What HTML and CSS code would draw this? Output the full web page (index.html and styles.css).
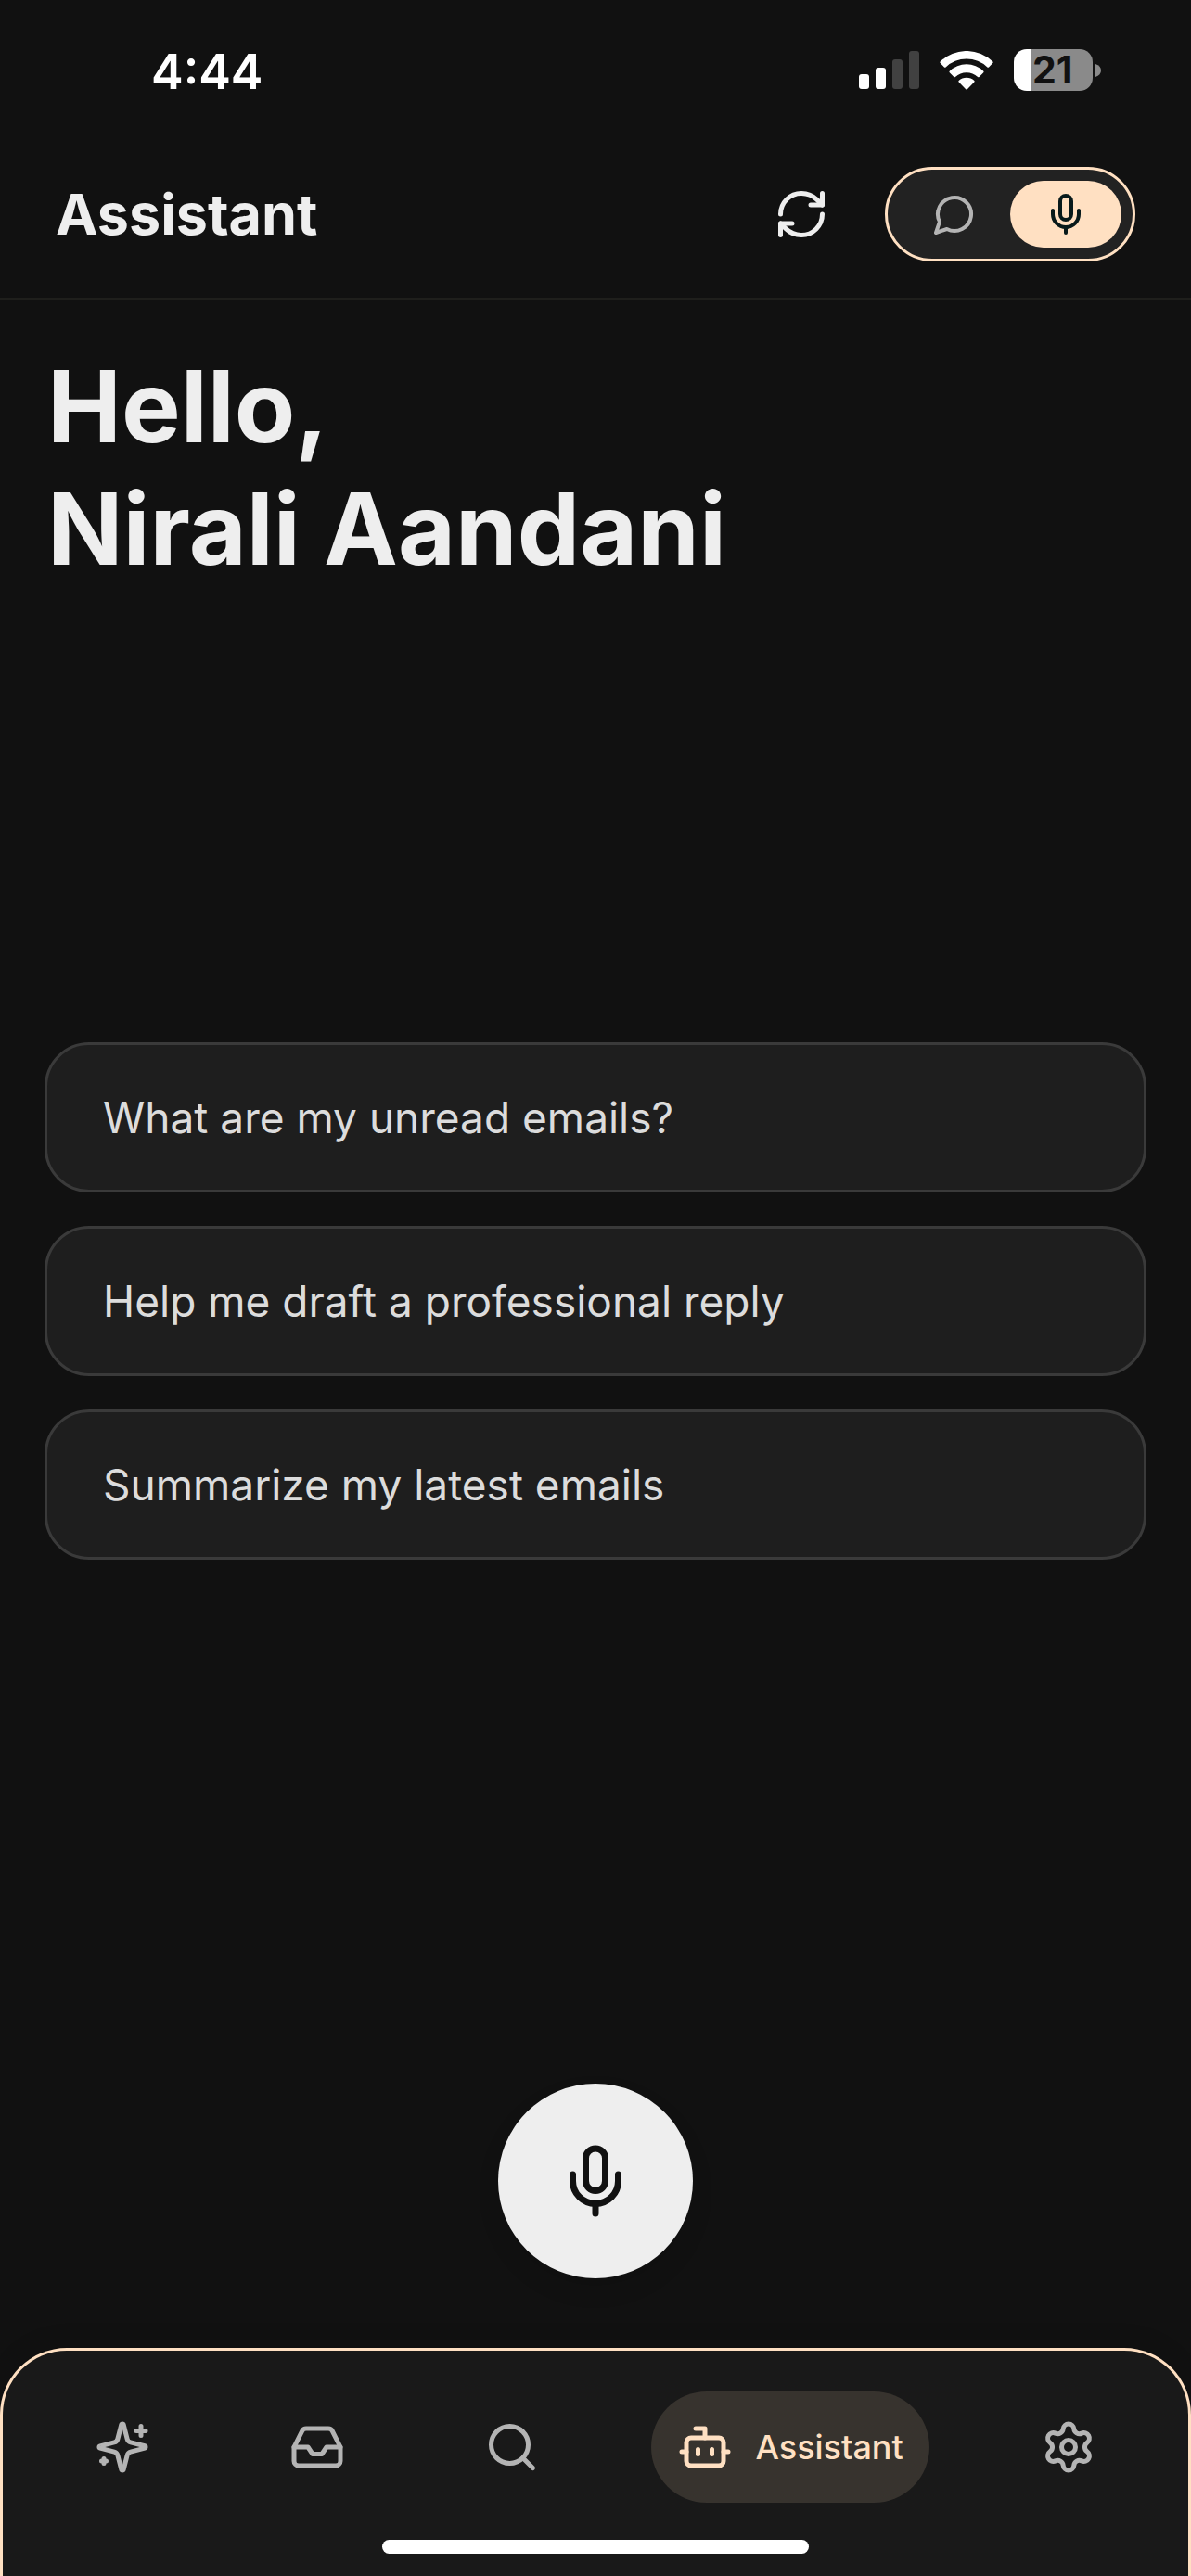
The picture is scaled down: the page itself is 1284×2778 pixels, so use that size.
FILE: index.html
```html
<!DOCTYPE html>
<html lang="en">
<head>
<meta charset="utf-8">
<meta name="viewport" content="width=device-width, initial-scale=1">
<title>Assistant</title>
<link rel="stylesheet" href="styles.css">
</head>
<body>
<div class="app">
  <div class="status-bar">
    <time class="clock">4:44</time>
    <div class="status-icons">
      <svg class="signal" viewBox="0 0 65 41" aria-hidden="true">
        <rect x="0" y="25" width="11" height="16" rx="3" fill="#fff"/>
        <rect x="18" y="18" width="11" height="23" rx="3" fill="#fff"/>
        <rect x="36" y="9" width="11" height="32" rx="3" fill="#414141"/>
        <rect x="54" y="0" width="11" height="41" rx="3" fill="#414141"/>
      </svg>
      <svg class="wifi" viewBox="0 0 58 42" fill="#fff" aria-hidden="true">
        <path d="M.6 11.6Q0 12.4.7 13.1L5 17.4Q5.8 18.2 6.6 17.4A32.5 32.5 0 0 1 51.4 17.4Q52.2 18.2 53 17.4L57.3 13.1Q58 12.4 57.4 11.6A40.5 40.5 0 0 0 .6 11.6Z"/>
        <path d="M10.7 21.7Q10 22.5 10.7 23.2L15.4 27.9Q16.1 28.6 16.9 27.9A18 18 0 0 1 41.1 27.9Q41.9 28.6 42.6 27.9L47.3 23.2Q48 22.5 47.3 21.7A26.5 26.5 0 0 0 10.7 21.7Z"/>
        <path d="M20.6 32Q19.9 32.8 20.7 33.6L28.2 41.2Q29 42 29.8 41.2L37.3 33.6Q38.1 32.8 37.4 32A12.5 12.5 0 0 0 20.6 32Z"/>
      </svg>
      <div class="battery">
        <span class="battery-body">21</span>
        <svg class="battery-cap" viewBox="0 0 6 14" aria-hidden="true"><path d="M0 0Q6 2 6 7T0 14Z" fill="#8a8a8a"/></svg>
      </div>
    </div>
  </div>

  <header class="header">
    <h1 class="title">Assistant</h1>
    <button class="refresh" type="button" aria-label="Refresh">
      <svg class="icon icon-lg" viewBox="0 0 24 24"><path d="M3 12a9 9 0 0 1 9-9 9.75 9.75 0 0 1 6.74 2.74L21 8"/><path d="M21 3v5h-5"/><path d="M21 12a9 9 0 0 1-9 9 9.75 9.75 0 0 1-6.74-2.74L3 16"/><path d="M8 16H3v5"/></svg>
    </button>
    <div class="mode-switch">
      <button class="mode" type="button" aria-label="Chat">
        <svg class="icon icon-md" viewBox="0 0 24 24"><path d="M7.9 20A9 9 0 1 0 4 16.1L2 22Z"/></svg>
      </button>
      <button class="mode mode-active" type="button" aria-label="Voice">
        <svg class="icon icon-md" viewBox="0 0 24 24"><rect x="9" y="2" width="6" height="13" rx="3"/><path d="M19 10v2a7 7 0 0 1-14 0v-2"/><path d="M12 19v3"/></svg>
      </button>
    </div>
  </header>

  <main class="content">
    <h2 class="greeting">Hello,<br>Nirali Aandani</h2>
    <div class="prompts">
      <button class="prompt" type="button">What are my unread emails?</button>
      <button class="prompt" type="button">Help me draft a professional reply</button>
      <button class="prompt" type="button">Summarize my latest emails</button>
    </div>
    <button class="talk" type="button" aria-label="Start talking">
      <svg class="icon icon-xl" viewBox="0 0 24 24"><rect x="9" y="2" width="6" height="13" rx="3"/><path d="M19 10v2a7 7 0 0 1-14 0v-2"/><path d="M12 19v3"/></svg>
    </button>
  </main>

  <footer class="tab-bar">
    <nav class="tabs">
      <a class="tab" href="#" aria-label="Highlights">
        <svg class="icon icon-lg" viewBox="0 0 24 24"><path d="M9.937 15.5A2 2 0 0 0 8.5 14.063l-6.135-1.582a.5.5 0 0 1 0-.962L8.5 9.936A2 2 0 0 0 9.937 8.5l1.582-6.135a.5.5 0 0 1 .963 0L14.063 8.5A2 2 0 0 0 15.5 9.937l6.135 1.581a.5.5 0 0 1 0 .964L15.5 14.063a2 2 0 0 0-1.437 1.437l-1.582 6.135a.5.5 0 0 1-.963 0z"/><path d="M20 3v4M22 5h-4M4 17v2M5 18H3"/></svg>
      </a>
      <a class="tab" href="#" aria-label="Inbox">
        <svg class="icon icon-lg" viewBox="0 0 24 24"><path d="M22 12h-6l-2 3h-4l-2-3H2"/><path d="M5.45 5.11 2 12v6a2 2 0 0 0 2 2h16a2 2 0 0 0 2-2v-6l-3.45-6.89A2 2 0 0 0 16.76 4H7.24a2 2 0 0 0-1.79 1.11z"/></svg>
      </a>
      <a class="tab" href="#" aria-label="Search">
        <svg class="icon icon-lg" viewBox="0 0 24 24"><circle cx="11" cy="11" r="8"/><path d="m21 21-4.3-4.3"/></svg>
      </a>
      <a class="tab tab-active" href="#" aria-current="page">
        <svg class="icon icon-lg" viewBox="0 0 24 24"><path d="M12 8V4H8"/><rect width="16" height="12" x="4" y="8" rx="2"/><path d="M2 14h2M20 14h2M15 13v2M9 13v2"/></svg>
        <span>Assistant</span>
      </a>
      <a class="tab" href="#" aria-label="Settings">
        <svg class="icon icon-lg" viewBox="0 0 24 24"><path d="M9.671 4.136a2.34 2.34 0 0 1 4.659 0 2.34 2.34 0 0 0 3.319 1.915 2.34 2.34 0 0 1 2.33 4.033 2.34 2.34 0 0 0 0 3.831 2.34 2.34 0 0 1-2.33 4.033 2.34 2.34 0 0 0-3.319 1.915 2.34 2.34 0 0 1-4.659 0 2.34 2.34 0 0 0-3.32-1.915 2.34 2.34 0 0 1-2.33-4.033 2.34 2.34 0 0 0 0-3.831A2.34 2.34 0 0 1 6.35 6.051a2.34 2.34 0 0 0 3.319-1.915"/><circle cx="12" cy="12" r="3"/></svg>
      </a>
    </nav>
    <div class="home-indicator"></div>
  </footer>
</div>
</body>
</html>
```
FILE: styles.css
```css
:root {
  --bg: #111111;
  --surface: #191919;
  --text: #eeeeee;
  --muted: #b4b4b4;
  --accent: #ffe0c2;
}

* {
  box-sizing: border-box;
}

body {
  margin: 0;
  background: var(--bg);
  color: var(--text);
  font-family: Inter, "Liberation Sans", sans-serif;
}

button {
  padding: 0;
  border: 0;
  background: none;
  color: inherit;
  font: inherit;
}

.app {
  display: flex;
  flex-direction: column;
  min-height: 100vh;
}

.icon {
  display: block;
  flex: none;
  fill: none;
  stroke: currentColor;
  stroke-width: 2;
  stroke-linecap: round;
  stroke-linejoin: round;
}

.icon-md { width: 48px; height: 48px; }
.icon-lg { width: 60px; height: 60px; }
.icon-xl { width: 84px; height: 84px; }

.status-bar {
  display: flex;
  align-items: center;
  justify-content: space-between;
  height: 141px;
  padding: 10px 97px 0 163px;
  color: #ffffff;
}

.clock {
  padding-top: 4px;
  font-size: 52px;
  font-weight: 600;
  line-height: 60px;
}

.status-icons {
  display: flex;
  align-items: center;
}

.signal { width: 65px; height: 41px; }
.wifi { width: 58px; height: 42px; margin: 0 22px; }

.battery {
  display: flex;
  align-items: center;
  gap: 3px;
}

.battery-body {
  width: 85px;
  padding-left: 20px;
  border-radius: 14px;
  background: linear-gradient(90deg, #ffffff 18px, #8a8a8a 18px);
  color: var(--bg);
  font-size: 41px;
  font-weight: 700;
  line-height: 45px;
}

.battery-cap { width: 6px; height: 14px; }

.header {
  display: flex;
  align-items: center;
  height: 183px;
  padding: 0 60px;
  border-bottom: 3px solid #1f1f1c;
}

.title {
  flex: 1;
  margin: 0;
  font-size: 61px;
  font-weight: 700;
  line-height: 72px;
}

.refresh {
  margin-right: 60px;
}

.mode-switch {
  display: flex;
  padding: 12px;
  border: 3px solid var(--accent);
  border-radius: 51px;
  background: #222222;
}

.mode {
  display: flex;
  align-items: center;
  justify-content: center;
  width: 120px;
  height: 72px;
  border-radius: 36px;
  color: var(--muted);
}

.mode-active {
  background: var(--accent);
  color: #081a1b;
}

.content {
  display: flex;
  flex: 1;
  flex-direction: column;
  padding: 48px 48px 75px;
}

.greeting {
  margin: 0;
  padding: 0 3px;
  font-size: 107px;
  font-weight: 700;
  line-height: 132px;
}

.prompts {
  display: flex;
  flex: 1;
  flex-direction: column;
  justify-content: center;
  gap: 36px;
  padding-bottom: 77px;
}

.prompt {
  padding: 48px 60px;
  border: 3px solid #3a3a3a;
  border-radius: 48px;
  background: #1e1e1e;
  color: #dcdcdc;
  font-size: 46px;
  line-height: 60px;
  text-align: left;
}

.talk {
  display: flex;
  align-items: center;
  justify-content: center;
  align-self: center;
  width: 210px;
  height: 210px;
  border-radius: 50%;
  background: var(--text);
  box-shadow: 0 12px 24px rgba(0, 0, 0, 0.1);
  color: var(--bg);
}

.tab-bar {
  padding: 44px 24px 24px;
  border: 3px solid var(--accent);
  border-bottom: 0;
  border-radius: 72px 72px 0 0;
  background: var(--surface);
  box-shadow: 0 -6px 24px rgba(0, 0, 0, 0.1);
}

.tabs {
  display: flex;
  justify-content: space-around;
}

.tab {
  display: flex;
  align-items: center;
  justify-content: center;
  min-width: 120px;
  height: 120px;
  border-radius: 60px;
  color: var(--muted);
  text-decoration: none;
}

.tab-active {
  gap: 24px;
  padding: 0 28px;
  background: #37332e;
  color: var(--accent);
  font-size: 36px;
  font-weight: 500;
}

.home-indicator {
  width: 460px;
  height: 15px;
  margin: 40px auto 0;
  border-radius: 8px;
  background: #ffffff;
}
```
